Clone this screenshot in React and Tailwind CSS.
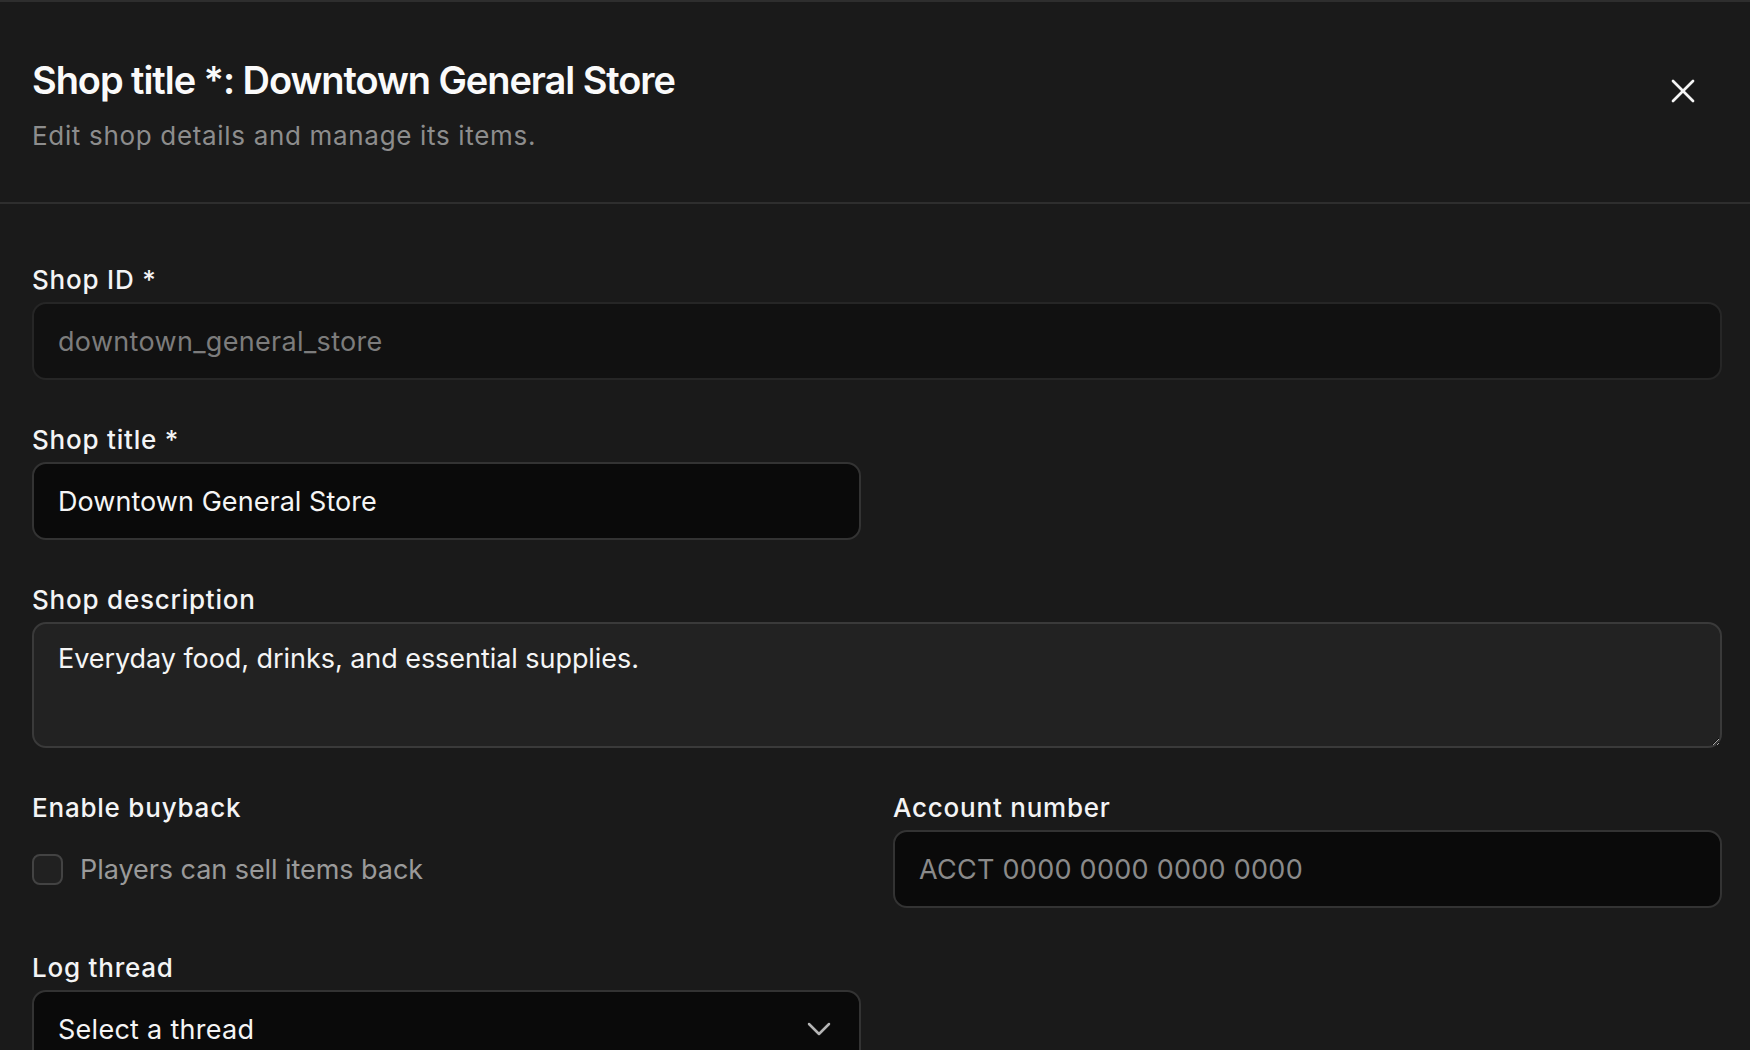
import React from "react";
import { X, ChevronDown } from "lucide-react";

function Label({ children }) {
  return (
    <div className="text-[26px] leading-[28px] font-medium tracking-[0.03em] text-[#f4f4f5]">{children}</div>
  );
}

export default function App() {
  return (
    <div className="w-[1750px] h-[1050px] overflow-hidden bg-[#1a1a1a] border-t-2 border-[#2e2e2e] font-['Inter',sans-serif]">
      <div className="h-[202px] border-b-2 border-[#2e2e2e] pl-8 pr-[47px] pt-[56px] flex justify-between items-start">
        <div className="flex flex-col">
          <h1 className="text-[38px] leading-[44px] font-semibold tracking-[-0.028em] text-[#fafafa]">
            Shop title *: Downtown General Store
          </h1>
          <p className="mt-[20px] text-[26px] leading-[28px] tracking-[0.026em] text-[#8d8d8d]">
            Edit shop details and manage its items.
          </p>
        </div>
        <button className="mt-[13px] text-[#f5f5f5]">
          <X size={40} strokeWidth={1.6} />
        </button>
      </div>

      <div className="pl-8 pr-7 pt-[62px] flex flex-col gap-[46px]">
        <div className="flex flex-col gap-2">
          <Label>Shop ID *</Label>
          <div className="h-[78px] rounded-[14px] border-2 border-[#262626] bg-[#111111] px-6 pt-[3px] flex items-center text-[27px] tracking-[0.012em] text-[#7c7c7c]">
            downtown_general_store
          </div>
        </div>

        <div className="grid grid-cols-2 gap-8">
          <div className="flex flex-col gap-2">
            <Label>Shop title *</Label>
            <div className="h-[78px] rounded-[14px] border-2 border-[#333333] bg-[#0a0a0a] px-6 pt-[3px] flex items-center text-[27px] tracking-[0.002em] text-[#f5f5f5]">
              Downtown General Store
            </div>
          </div>
          <div></div>
        </div>

        <div className="flex flex-col gap-2">
          <Label>Shop description</Label>
          <textarea
            readOnly
            defaultValue="Everyday food, drinks, and essential supplies."
            className="h-[126px] rounded-[14px] border-2 border-[#3a3a3a] bg-[#222222] px-6 pt-[21px] pb-[12px] text-[27px] leading-[28px] tracking-[-0.002em] text-[#f5f5f5] outline-none [color-scheme:dark] font-['Inter',sans-serif]"
          />
        </div>

        <div className="grid grid-cols-2 gap-8">
          <div className="flex flex-col gap-2">
            <Label>Enable buyback</Label>
            <div className="h-[78px] flex items-center gap-[17px]">
              <div className="w-[31px] h-[31px] rounded-[8px] border-2 border-[#434343] bg-[#212121]"></div>
              <span className="pt-[2px] text-[27px] tracking-[-0.002em] text-[#9a9a9a]">Players can sell items back</span>
            </div>
          </div>
          <div className="flex flex-col gap-2">
            <Label>Account number</Label>
            <div className="h-[78px] rounded-[14px] border-2 border-[#333333] bg-[#0a0a0a] px-6 pt-[3px] flex items-center text-[27px] tracking-[0.01em] text-[#8a8a8a]">
              ACCT 0000 0000 0000 0000
            </div>
          </div>
        </div>

        <div className="grid grid-cols-2 gap-8">
          <div className="flex flex-col gap-2">
            <Label>Log thread</Label>
            <div className="h-[78px] rounded-[14px] border-2 border-[#333333] bg-[#0a0a0a] pl-6 pr-5 flex items-center justify-between text-[27px] tracking-[0.01em] text-[#f5f5f5]">
              <span className="pt-[3px]">Select a thread</span>
              <ChevronDown size={40} strokeWidth={1.5} className="text-[#b5b5b5]" />
            </div>
          </div>
          <div></div>
        </div>
      </div>
    </div>
  );
}
